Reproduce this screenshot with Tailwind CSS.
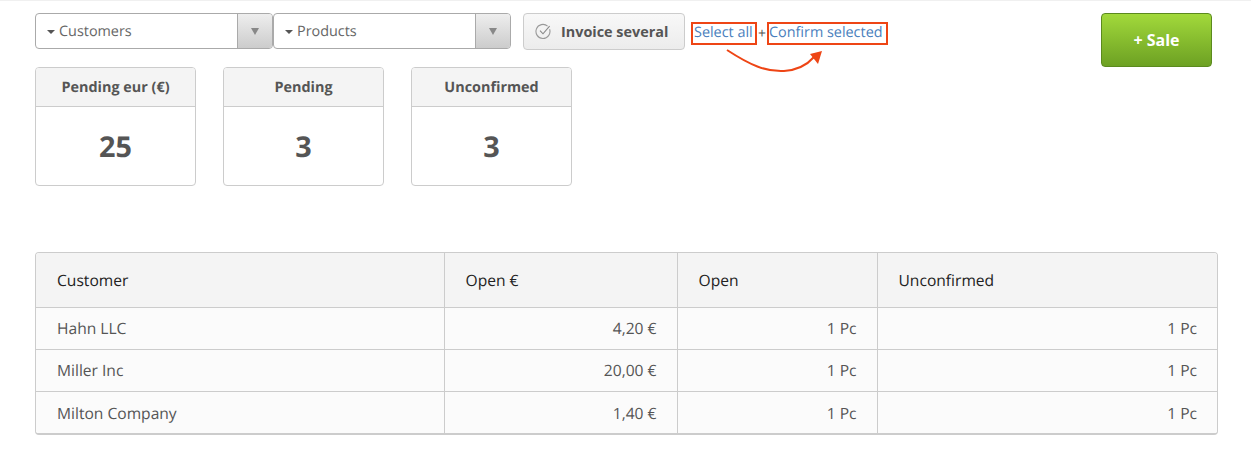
<!DOCTYPE html>
<html lang="en">
<head>
  <meta charset="UTF-8">
  <title>Sales</title>
  <script src="https://cdn.jsdelivr.net/npm/@tailwindcss/browser@4"></script>
</head>
<body class="bg-white font-['Open_Sans','Noto_Sans',sans-serif] text-[#555] [text-rendering:geometricPrecision]">
  <div class="relative h-[456px] w-[1251px] overflow-hidden border-t border-[#f0f0f0] pt-3 pl-[35px] pr-[33px]">
    <!-- Toolbar -->
    <div class="flex h-[54px] items-start">
      <div class="flex h-9 w-[238px] overflow-hidden rounded border border-[#aaa] bg-white">
        <div class="flex flex-1 items-center gap-1 pl-[11px] pt-[2px] text-[14.4px] text-[#666]"><span class="h-0 w-0 border-x-4 border-t-4 border-x-transparent border-t-[#555]"></span>Customers</div>
        <div class="flex w-[35px] items-center justify-center border-l border-[#aaa] bg-gradient-to-b from-[#eeeeee] to-[#cccccc]"><span class="h-0 w-0 border-x-[4.5px] border-t-[7px] border-x-transparent border-t-[#888]"></span></div>
      </div>
      <div class="flex h-9 w-[238px] overflow-hidden rounded border border-[#aaa] bg-white">
        <div class="flex flex-1 items-center gap-1 pl-[11px] pt-[2px] text-[14.4px] text-[#666]"><span class="h-0 w-0 border-x-4 border-t-4 border-x-transparent border-t-[#555]"></span>Products</div>
        <div class="flex w-[35px] items-center justify-center border-l border-[#aaa] bg-gradient-to-b from-[#eeeeee] to-[#cccccc]"><span class="h-0 w-0 border-x-[4.5px] border-t-[7px] border-x-transparent border-t-[#888]"></span></div>
      </div>
      <button class="ml-3 flex h-[37px] w-[162px] items-center gap-[9px] rounded border border-[#ccc] bg-gradient-to-b from-[#f8f8f8] to-[#ececec] pl-[11px] text-[14.4px] font-bold text-[#555]">
        <svg width="17" height="17" viewBox="0 0 17 17" fill="none" stroke="#999" stroke-width="1.1"><path d="M14.6 6.2A7 7 0 1 1 12.6 3.2"/><path d="M5 7.6 8 10.8 14.6 3.2" stroke="#888"/></svg>
        Invoice several
      </button>
      <div class="ml-[6px] mt-[9px] flex h-[23px] items-center text-[14.4px] text-[#4a80bd]">
        <a class="flex h-[23px] w-[66px] items-center border-2 border-[#ee4515] pl-[1px] pb-[1px] whitespace-nowrap">Select all</a>
        <span class="w-[10px] text-center text-sm text-[#555]">+</span>
        <a class="flex h-[23px] w-[121px] items-center border-2 border-[#ee4515] pb-[1px] whitespace-nowrap">Confirm selected</a>
      </div>
      <button class="ml-auto mr-[6px] h-[54px] w-[111px] rounded border border-[#5b8a1e] bg-gradient-to-b from-[#a2d93b] to-[#6da123] text-base font-bold text-white">+ Sale</button>
    </div>

    <!-- Arrow annotation -->
    <svg class="absolute left-[720px] top-[44px]" width="110" height="32" viewBox="0 0 110 32" fill="none">
      <path d="M7 5C30 20 46 27 64 26 78 25 87 20 94 12" stroke="#ee4515" stroke-width="2"/>
      <path d="M102 6 90 9 98 19Z" fill="#ee4515"/>
    </svg>

    <!-- Summary cards -->
    <div class="flex gap-[27px]">
      <div class="h-[119px] w-[161px] overflow-hidden rounded border border-[#ccc]">
        <div class="flex h-[39px] items-center justify-center border-b border-[#ccc] bg-[#f4f4f4] pt-[2px] text-[14.4px] font-bold">Pending eur (€)</div>
        <div class="flex h-[78px] items-center justify-center pt-[2px] text-[28.8px] font-bold">25</div>
      </div>
      <div class="h-[119px] w-[161px] overflow-hidden rounded border border-[#ccc]">
        <div class="flex h-[39px] items-center justify-center border-b border-[#ccc] bg-[#f4f4f4] pt-[2px] text-[14.4px] font-bold">Pending</div>
        <div class="flex h-[78px] items-center justify-center pt-[2px] text-[28.8px] font-bold">3</div>
      </div>
      <div class="h-[119px] w-[161px] overflow-hidden rounded border border-[#ccc]">
        <div class="flex h-[39px] items-center justify-center border-b border-[#ccc] bg-[#f4f4f4] pt-[2px] text-[14.4px] font-bold">Unconfirmed</div>
        <div class="flex h-[78px] items-center justify-center pt-[2px] text-[28.8px] font-bold">3</div>
      </div>
    </div>

    <!-- Table -->
    <div class="mt-[66px] w-[1183px] overflow-hidden rounded border border-b-2 border-[#ccc]">
      <table class="w-full table-fixed border-collapse text-[15.6px]">
        <colgroup><col class="w-[408px]"><col class="w-[233px]"><col class="w-[200px]"><col></colgroup>
        <thead class="bg-[#f4f4f4] text-left text-[#222]">
          <tr class="h-[54px] border-b border-[#ccc]">
            <th class="pl-[21px] pt-[2px] font-normal">Customer</th>
            <th class="border-l border-[#ccc] pl-[21px] pt-[2px] font-normal">Open €</th>
            <th class="border-l border-[#ccc] pl-[21px] pt-[2px] font-normal">Open</th>
            <th class="border-l border-[#ccc] pl-[21px] pt-[2px] font-normal">Unconfirmed</th>
          </tr>
        </thead>
        <tbody class="bg-[#fbfbfb] text-[#555]">
          <tr class="h-[42px] border-b border-[#ccc]">
            <td class="pl-[21px] pt-[2px]">Hahn LLC</td>
            <td class="border-l border-[#ccc] pr-5 pt-[2px] text-right">4,20 €</td>
            <td class="border-l border-[#ccc] pr-5 pt-[2px] text-right">1 Pc</td>
            <td class="border-l border-[#ccc] pr-5 pt-[2px] text-right">1 Pc</td>
          </tr>
          <tr class="h-[42px] border-b border-[#ccc]">
            <td class="pl-[21px] pt-[2px]">Miller Inc</td>
            <td class="border-l border-[#ccc] pr-5 pt-[2px] text-right">20,00 €</td>
            <td class="border-l border-[#ccc] pr-5 pt-[2px] text-right">1 Pc</td>
            <td class="border-l border-[#ccc] pr-5 pt-[2px] text-right">1 Pc</td>
          </tr>
          <tr class="h-[42px]">
            <td class="pl-[21px] pt-[2px]">Milton Company</td>
            <td class="border-l border-[#ccc] pr-5 pt-[2px] text-right">1,40 €</td>
            <td class="border-l border-[#ccc] pr-5 pt-[2px] text-right">1 Pc</td>
            <td class="border-l border-[#ccc] pr-5 pt-[2px] text-right">1 Pc</td>
          </tr>
        </tbody>
      </table>
    </div>
  </div>
</body>
</html>
